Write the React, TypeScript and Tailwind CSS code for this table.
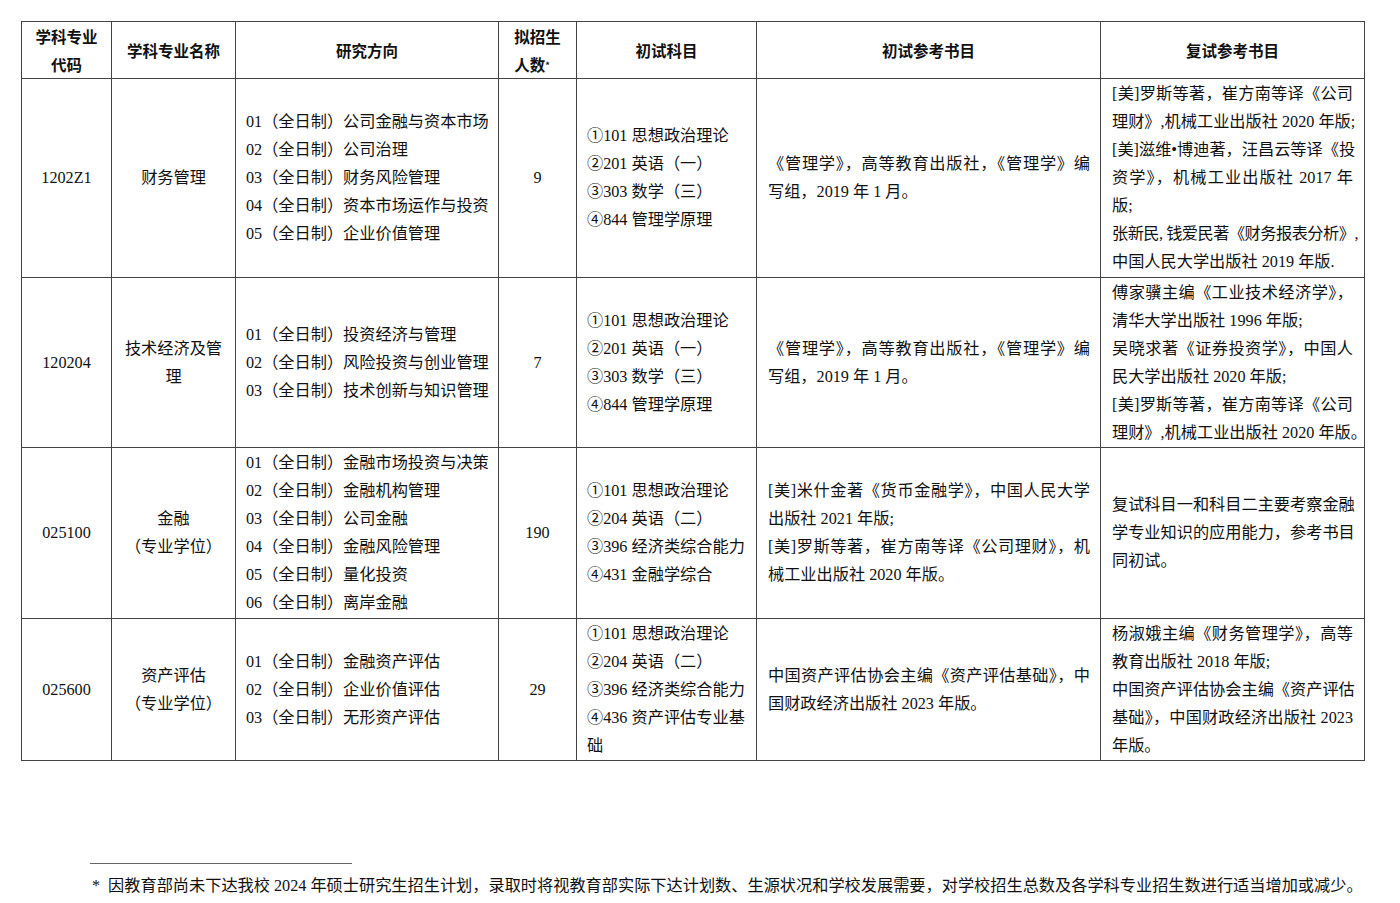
import React from "react";

type Line = { t: React.ReactNode; j?: boolean; tight?: boolean };

const body = "font-['Liberation_Serif','Noto_Sans_CJK_SC',serif] text-[16.2px] leading-[28px] text-[#111]";

function Lines({ lines, center }: { lines: Line[]; center?: boolean }) {
  return (
    <div className={center ? "text-center" : "text-left"}>
      {lines.map((l, i) => (
        <div
          key={i}
          className={
            (l.j
              ? "whitespace-nowrap text-justify [text-align-last:justify]"
              : "whitespace-nowrap") + (l.tight ? " tracking-[-0.5px]" : "")
          }
        >
          {l.t}
        </div>
      ))}
    </div>
  );
}

const L = (arr: (string | [string, boolean] | Line)[]): Line[] =>
  arr.map((a) =>
    typeof a === "string" ? { t: a } : Array.isArray(a) ? { t: a[0], j: a[1] } : a
  );

type Row = {
  h: string;
  code: string;
  name: string[];
  dirs: string[];
  num: string;
  subj: string[];
  ref1: Line[];
  ref2: Line[];
};

const rows: Row[] = [
  {
    h: "h-[199px]",
    code: "1202Z1",
    name: ["财务管理"],
    dirs: [
      "01（全日制）公司金融与资本市场",
      "02（全日制）公司治理",
      "03（全日制）财务风险管理",
      "04（全日制）资本市场运作与投资",
      "05（全日制）企业价值管理",
    ],
    num: "9",
    subj: ["①101 思想政治理论", "②201 英语（一）", "③303 数学（三）", "④844 管理学原理"],
    ref1: L([["《管理学》，高等教育出版社，《管理学》编", true], "写组，2019 年 1 月。"]),
    ref2: L([
      ["[美]罗斯等著，崔方南等译《公司", true],
      ["理财》,机械工业出版社 2020 年版;", true],
      ["[美]滋维•博迪著，汪昌云等译《投", true],
      ["资学》，机械工业出版社  2017 年", true],
      "版;",
      { t: "张新民, 钱爱民著《财务报表分析》,", tight: true },
      "中国人民大学出版社 2019 年版.",
    ]),
  },
  {
    h: "h-[170px]",
    code: "120204",
    name: ["技术经济及管", "理"],
    dirs: [
      "01（全日制）投资经济与管理",
      "02（全日制）风险投资与创业管理",
      "03（全日制）技术创新与知识管理",
    ],
    num: "7",
    subj: ["①101 思想政治理论", "②201 英语（一）", "③303 数学（三）", "④844 管理学原理"],
    ref1: L([["《管理学》，高等教育出版社，《管理学》编", true], "写组，2019 年 1 月。"]),
    ref2: L([
      ["傅家骥主编《工业技术经济学》，", true],
      "清华大学出版社 1996 年版;",
      ["吴晓求著《证券投资学》，中国人", true],
      "民大学出版社 2020 年版;",
      ["[美]罗斯等著，崔方南等译《公司", true],
      ["理财》,机械工业出版社 2020 年版。", true],
    ]),
  },
  {
    h: "h-[171px]",
    code: "025100",
    name: ["金融", "（专业学位）"],
    dirs: [
      "01（全日制）金融市场投资与决策",
      "02（全日制）金融机构管理",
      "03（全日制）公司金融",
      "04（全日制）金融风险管理",
      "05（全日制）量化投资",
      "06（全日制）离岸金融",
    ],
    num: "190",
    subj: ["①101 思想政治理论", "②204 英语（二）", "③396 经济类综合能力", "④431 金融学综合"],
    ref1: L([
      ["[美]米什金著《货币金融学》，中国人民大学", true],
      "出版社 2021 年版;",
      ["[美]罗斯等著，崔方南等译《公司理财》，机", true],
      "械工业出版社 2020 年版。",
    ]),
    ref2: L([
      ["复试科目一和科目二主要考察金融", true],
      ["学专业知识的应用能力，参考书目", true],
      "同初试。",
    ]),
  },
  {
    h: "h-[142px]",
    code: "025600",
    name: ["资产评估", "（专业学位）"],
    dirs: [
      "01（全日制）金融资产评估",
      "02（全日制）企业价值评估",
      "03（全日制）无形资产评估",
    ],
    num: "29",
    subj: ["①101 思想政治理论", "②204 英语（二）", "③396 经济类综合能力", "④436 资产评估专业基", "础"],
    ref1: L([["中国资产评估协会主编《资产评估基础》，中", true], "国财政经济出版社 2023 年版。"]),
    ref2: L([
      ["杨淑娥主编《财务管理学》，高等", true],
      "教育出版社 2018 年版;",
      ["中国资产评估协会主编《资产评估", true],
      ["基础》，中国财政经济出版社 2023", true],
      "年版。",
    ]),
  },
];

const td = "border border-[#444] align-middle p-0";
const th = "border border-[#444] align-middle p-0 font-['Noto_Sans_CJK_SC',sans-serif] font-bold text-[15.5px] leading-[28px] text-[#111] text-center";

export default function App() {
  return (
    <div className="w-[1400px] h-[903px] overflow-hidden bg-white">
      <div className="pt-[21px] pl-[21px]">
        <table className="table-fixed border-collapse w-[1343px]">
          <colgroup>
            <col className="w-[90px]" />
            <col className="w-[124px]" />
            <col className="w-[263px]" />
            <col className="w-[78px]" />
            <col className="w-[180px]" />
            <col className="w-[344px]" />
            <col className="w-[264px]" />
          </colgroup>
          <thead>
            <tr>
              <th className={`${th} h-[57px]`}>
                <div>学科专业</div>
                <div>代码</div>
              </th>
              <th className={th}>学科专业名称</th>
              <th className={th}>研究方向</th>
              <th className={th}>
                <div className="inline-block text-left">
                  <div>拟招生</div>
                  <div>
                    人数<sup className="text-[9px] relative top-[-2px]">*</sup>
                  </div>
                </div>
              </th>
              <th className={th}>初试科目</th>
              <th className={th}>初试参考书目</th>
              <th className={th}>复试参考书目</th>
            </tr>
          </thead>
          <tbody className={body}>
            {rows.map((r) => (
              <tr key={r.code}>
                <td className={`${td} ${r.h} text-center`}>{r.code}</td>
                <td className={`${td} text-center`}>
                  {r.name.map((n) => (
                    <div key={n}>{n}</div>
                  ))}
                </td>
                <td className={`${td} pl-[10px]`}>
                  <Lines lines={r.dirs.map((d) => ({ t: d }))} />
                </td>
                <td className={`${td} text-center`}>{r.num}</td>
                <td className={`${td} pl-[10px]`}>
                  <Lines lines={r.subj.map((d) => ({ t: d }))} />
                </td>
                <td className={`${td} pl-[11px] pr-[10px]`}>
                  <Lines lines={r.ref1} />
                </td>
                <td className={`${td} pl-[11px] pr-[11px]`}>
                  <Lines lines={r.ref2} />
                </td>
              </tr>
            ))}
          </tbody>
        </table>
      </div>
      <div className="ml-[90px] mt-[102px] w-[262px] h-px bg-[#666]" />
      <div className={`${body} ml-[92px] mt-[8px] whitespace-nowrap`}>
        <span className="mr-[8px]">*</span>
        因教育部尚未下达我校 2024 年硕士研究生招生计划，录取时将视教育部实际下达计划数、生源状况和学校发展需要，对学校招生总数及各学科专业招生数进行适当增加或减少。
      </div>
      <div className={`${body} text-center mt-[0px] w-[1444px]`}>10</div>
    </div>
  );
}
